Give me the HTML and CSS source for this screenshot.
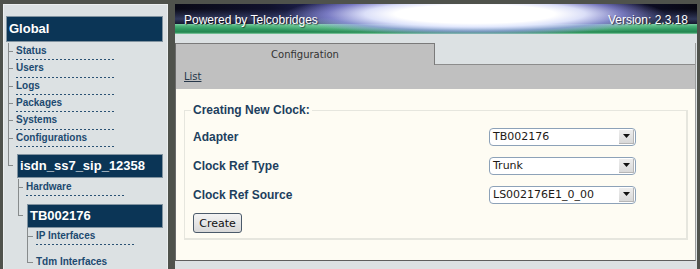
FILE: index.html
```html
<!DOCTYPE html>
<html>
<head>
<meta charset="utf-8">
<title>TelcoBridges - Clock</title>
<link rel="stylesheet" href="styles.css">
</head>
<body>
<div class="page">
  <aside class="sidebar">
    <div class="box box-global">Global</div>
    <ul class="tree l1">
      <li><a class="item">Status</a></li>
      <li><a class="item">Users</a></li>
      <li><a class="item">Logs</a></li>
      <li><a class="item">Packages</a></li>
      <li><a class="item">Systems</a></li>
      <li><a class="item">Configurations</a></li>
      <li class="node">
        <div class="box box-node">isdn_ss7_sip_12358</div>
        <ul class="tree l2">
          <li><a class="item">Hardware</a></li>
          <li class="node node-l2">
            <div class="box box-node">TB002176</div>
            <ul class="tree l3">
              <li><a class="item">IP Interfaces</a></li>
              <li class="folder"><a class="item">Tdm Interfaces</a></li>
            </ul>
          </li>
        </ul>
      </li>
    </ul>
  </aside>
  <main class="main">
    <header class="banner">
      <span class="banner-text">Powered by Telcobridges</span>
      <span class="banner-text">Version: 2.3.18</span>
    </header>
    <section class="panel">
      <div class="tabs">
        <div class="tab">Configuration</div>
        <div class="tabs-rest"></div>
      </div>
      <div class="subnav"><a class="sublink">List</a></div>
      <div class="content">
        <fieldset class="form-set">
          <legend class="legend">Creating New Clock:</legend>
          <div class="form-grid">
            <label class="label">Adapter</label>
            <div class="select"><span class="select-value">TB002176</span><span class="select-arrow"><svg width="7" height="4" viewBox="0 0 7 4"><path d="M0 0H7L3.5 4Z" fill="#111"/></svg></span></div>
            <label class="label">Clock Ref Type</label>
            <div class="select"><span class="select-value">Trunk</span><span class="select-arrow"><svg width="7" height="4" viewBox="0 0 7 4"><path d="M0 0H7L3.5 4Z" fill="#111"/></svg></span></div>
            <label class="label">Clock Ref Source</label>
            <div class="select"><span class="select-value">LS002176E1_0_00</span><span class="select-arrow"><svg width="7" height="4" viewBox="0 0 7 4"><path d="M0 0H7L3.5 4Z" fill="#111"/></svg></span></div>
          </div>
          <button class="btn" type="button">Create</button>
        </fieldset>
      </div>
    </section>
  </main>
</div>
</body>
</html>
```
FILE: styles.css
```css
html, body {
  margin: 0;
  padding: 0;
  background: #4f524c;
  overflow: hidden;
}

.page {
  display: flex;
  gap: 7px;
  height: 269px;
  padding: 4px 0 0 3px;
  box-sizing: border-box;
  font-family: "Liberation Sans", Arial, sans-serif;
}

/* ---------- sidebar ---------- */
.sidebar {
  width: 165px;
  flex: none;
  box-sizing: border-box;
  background: #dce1e3;
  border: 1px solid #eceff0;
  border-bottom: none;
  padding: 11px 4px 0 2px;
}

.box {
  background: #0b3556;
  border: 1px solid #8193a0;
  color: #fff;
  font-weight: bold;
  font-size: 13px;
  padding-left: 2px;
  white-space: nowrap;
}
.box-global {
  line-height: 24px;
}
.box-node {
  line-height: 22px;
  margin-left: 1px;
}

.tree {
  list-style: none;
  margin: 0;
  padding: 0 0 0 8px;
}
.tree.l1 { margin: 1px 0 0 2px; }
.tree.l2 { margin: 1px 0 0 2px; }
.tree.l3 { margin: 0 0 0 1px; padding-left: 9px; }

.tree > li {
  position: relative;
}
.tree > li::before {
  content: "";
  position: absolute;
  left: -8px;
  top: 0;
  width: 4px;
  height: 8px;
  border-left: 1px solid #878b8c;
  border-bottom: 1px solid #878b8c;
}
.tree > li:not(:last-child)::after {
  content: "";
  position: absolute;
  left: -8px;
  top: 0;
  bottom: 0;
  border-left: 1px solid #878b8c;
}
.tree.l3 > li::before,
.tree.l3 > li:not(:last-child)::after { left: -9px; width: 5px; }

.tree > li.node { padding-top: 7px; }
.tree > li.node::before { height: 18px; }
.tree > li.node-l2 { padding-top: 7.67px; }
.tree > li.node-l2::before { height: 18.67px; }
.tree > li.folder { padding-top: 8.33px; }
.tree > li.folder::before { height: 16.33px; }

.item {
  display: block;
  width: 99px;
  font-size: 10px;
  font-weight: bold;
  color: #1d4a70;
  line-height: 12px;
  padding: 2px 0 3.33px;
  background: repeating-linear-gradient(to right, #2a5274 0 2px, transparent 2px 4px) left bottom / 100% 1px no-repeat;
  white-space: nowrap;
}

/* ---------- main ---------- */
.main {
  width: 522px;
  flex: none;
  display: flex;
  flex-direction: column;
  background: #dce1e3;
}

.banner {
  height: 30px;
  flex: none;
  display: flex;
  justify-content: space-between;
  align-items: flex-start;
  padding: 9px 9px 0 9px;
  box-sizing: border-box;
  background:
    radial-gradient(190px 22px at 300px 10px, #ffffff 0%, #ffffff 42%, rgba(228,232,255,0.95) 58%, rgba(150,150,230,0.7) 78%, rgba(90,90,190,0) 100%),
    radial-gradient(230px 9px at 290px 21px, rgba(230,255,240,0.95) 0%, rgba(160,230,190,0.45) 50%, rgba(120,200,160,0) 100%),
    linear-gradient(to bottom, rgba(0,0,0,0) 0, rgba(0,0,0,0) 20px, #7fd3a5 20px, #4cb27a 22px, #2f9960 25px, #238650 28px, #3f9f6a 29px, #9fd8b8 30px),
    linear-gradient(to bottom, rgba(0,0,0,0) 0, rgba(70,80,140,0.0) 5px, rgba(90,105,160,0.5) 15px, rgba(60,70,120,0.25) 20px),
    linear-gradient(to right, #090916 0%, #10122c 18%, #2a2c6c 34%, #4c4cac 46%, #4848a8 66%, #202258 80%, #0c0d24 90%, #070712 100%);
}
.banner-text {
  color: #fff;
  font-size: 12px;
  line-height: 14px;
  text-shadow: 1px 1px 1px rgba(0,0,0,0.55);
  white-space: nowrap;
}

.panel {
  margin-top: 9px;
  display: flex;
  flex-direction: column;
  border-left: 1px solid #6c6c6c;
  border-right: 1px solid #9a9c9c;
  border-bottom: 1px solid #5e5e5e;
  margin-right: 1px;
}

.tabs {
  display: flex;
  height: 22px;
}
.tab {
  width: 258px;
  flex: none;
  background: #c0c0c0;
  border-top: 1px solid #7a7a7a;
  border-right: 1px solid #7a7a7a;
  text-align: center;
  font-family: "DejaVu Sans", sans-serif;
  font-size: 10px;
  line-height: 21px;
  color: #333;
}
.tabs-rest {
  flex: 1;
  background: #dce1e3;
  border-bottom: 1px solid #8c8c8c;
}

.subnav {
  background: #c0c0c0;
  height: 24px;
  box-sizing: border-box;
  padding: 0 0 0 8px;
  line-height: 19px;
}
.sublink {
  font-family: "DejaVu Sans", sans-serif;
  font-size: 10px;
  color: #27384a;
  text-decoration: underline;
}

.content {
  background: #fefcf3;
  height: 171px;
  padding: 14px 7px 0 8px;
  box-sizing: border-box;
}

.form-set {
  margin: 0;
  border: 2px solid #e6e6de;
  border-width: 1px 2px 2px 1px;
  padding: 5px 8px 5px 8px;
  min-width: 0;
}
.legend {
  font-weight: bold;
  font-size: 12px;
  line-height: 14px;
  color: #1d3f5e;
  padding: 0 2px;
  margin-left: -2px;
}

.form-grid {
  display: grid;
  grid-template-columns: 296px 147px;
  grid-auto-rows: 29px;
  align-items: center;
}
.label {
  font-weight: bold;
  font-size: 12px;
  color: #1d3f5e;
}

.select {
  height: 18px;
  box-sizing: border-box;
  border: 1px solid #8da2b8;
  border-radius: 4px;
  background: #fff;
  display: flex;
  align-items: center;
  padding: 0 1px 0 3px;
}
.select-value {
  flex: 1;
  font-family: "DejaVu Sans", sans-serif;
  font-size: 11px;
  color: #1e1a16;
  line-height: 16px;
}
.select-arrow {
  width: 15px;
  height: 14px;
  box-sizing: border-box;
  background: linear-gradient(#ededed, #d9d9d9);
  border-right: 1px solid #b6b6b6;
  border-bottom: 1px solid #b6b6b6;
  display: flex;
  align-items: center;
  justify-content: center;
}

.btn {
  display: block;
  margin-top: 4px;
  width: 49px;
  height: 20px;
  padding: 0;
  border: 1px solid #4b5a6a;
  border-radius: 3px;
  background: linear-gradient(#f3f3f3, #d8d8d8);
  font-family: "DejaVu Sans", sans-serif;
  font-size: 11px;
  color: #111;
}
```
